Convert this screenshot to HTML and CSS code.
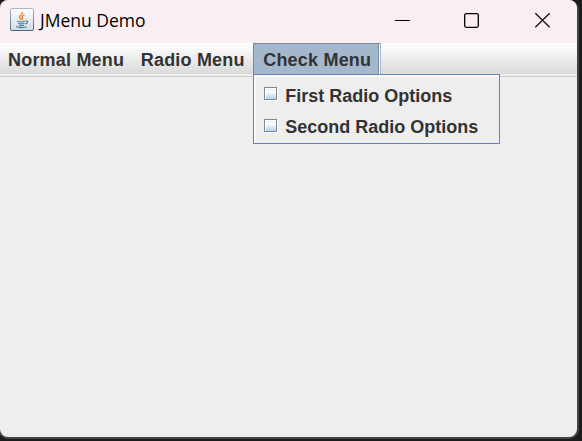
FILE: index.html
```html
<!DOCTYPE html>
<html lang="en">
<head>
<meta charset="utf-8">
<title>JMenu Demo</title>
<link rel="stylesheet" href="styles.css">
</head>
<body>
<div class="window">
  <header class="titlebar">
    <svg class="app-icon" width="24" height="24" viewBox="0 0 24 24">
      <defs><linearGradient id="tile" x2="0" y2="1"><stop offset="0" stop-color="#fff"/><stop offset="1" stop-color="#d3dce3"/></linearGradient><linearGradient id="edge" x2="0" y2="1"><stop offset="0" stop-color="#a9b8c2"/><stop offset="1" stop-color="#496b81"/></linearGradient></defs>
      <rect x=".5" y=".5" width="23" height="22" rx="1.5" fill="url(#tile)" stroke="url(#edge)"/>
      <path d="M12.500 4C13.500 6 9 7 9.500 9.500C9.700 10.600 11 11 11 12M14.500 7C11.500 8 11.500 9 12.500 10.200Q13 11 12 12" fill="none" stroke="#e9873d" stroke-width="1.500"/>
      <path d="M7 13.200Q11 14.500 15 13.200M8 15.300Q11 16.500 14.500 15.300M9 17.300Q11.500 18 14 17.300M15.500 13Q18 12.500 17.500 14.300Q17 15.500 15 16M6 18.500Q11 20.700 17 18.700" fill="none" stroke="#55809e" stroke-width="1.200"/>
    </svg>
    <h1 class="title">JMenu Demo</h1>
    <svg class="controls" width="156" height="16" viewBox="0 0 156 16" fill="none" stroke="#111" stroke-width="1.300">
      <path d="M0 8.500H15" stroke-width="1" stroke="#000"/>
      <rect x="69.700" y="1.700" width="13.600" height="13.600" rx="1.500" stroke="#000"/>
      <path d="M140.300 1.300L154.700 15.200M154.700 1.300L140.300 15.200"/>
    </svg>
  </header>
  <nav class="menubar">
    <div class="menu">Normal Menu</div>
    <div class="menu">Radio Menu</div>
    <div class="menu selected">Check Menu
      <div class="popup">
        <div class="item"><i class="check"></i><span>First Radio Options</span></div>
        <div class="item"><i class="check"></i><span>Second Radio Options</span></div>
      </div>
    </div>
  </nav>
  <main class="content"></main>
</div>
</body>
</html>
```
FILE: styles.css
```css
* { box-sizing: border-box; }
body {
  margin: 0;
  height: 441px;
  overflow: hidden;
  background: #1c1c1c;
}
.window {
  width: 581px;
  height: 439px;
  margin-left: -2px;
  display: flex;
  flex-direction: column;
  border: 2px solid #434343;
  border-top: 0;
  border-radius: 10px;
  background: #eee;
}
.titlebar {
  height: 43px;
  flex: none;
  display: flex;
  align-items: center;
  padding: 0 26px 3px 10px;
  border-radius: 8px 8px 0 0;
  background: #f9eff3;
}
.app-icon { flex: none; }
.title {
  margin: 0 0 0 6px;
  font: 400 17.5px/24px "Open Sans", sans-serif;
  color: #000;
  white-space: nowrap;
}
.controls { margin-left: auto; }
.menubar {
  height: 34px;
  flex: none;
  display: flex;
  border-bottom: 1px solid #ccc;
  background: linear-gradient(#fff, #dadada) 0 0 / 100% 31px no-repeat;
  font: 700 18px/32px "Liberation Sans", sans-serif;
  letter-spacing: 0.2px;
  color: #333;
}
.menu {
  position: relative;
  height: 31px;
  padding: 1px 8.5px 0 8px;
  white-space: nowrap;
}
.menu.selected {
  width: 128px;
  padding: 0 0 0 9px;
  border: 1px solid #7a8a99;
  border-bottom: 0;
  border-right: 1px solid #a3b8cc;
  background: #a3b8cc;
  box-shadow: inset -1px 0 #fff, inset -2px 0 #7a8a99;
}
.popup {
  position: absolute;
  left: -1px;
  top: 30px;
  width: 247px;
  height: 70px;
  padding: 5px 0 0 10px;
  border: 1px solid #6382bf;
  background: #eee;
  box-shadow: inset 2px 2px #fafafa;
  letter-spacing: 0;
}
.item {
  height: 31px;
  display: flex;
  align-items: center;
}
.item span { margin-left: 8px; }
.check {
  width: 13px;
  height: 13px;
  margin-top: -5px;
  border: 1px solid #7a8a99;
  background: linear-gradient(#dce7f1, #fff 35%, #b8cfe5);
  box-shadow: inset 1px 1px #fff, 1px 1px #fff;
}
.item + .item .check { margin-top: -3px; }
```
